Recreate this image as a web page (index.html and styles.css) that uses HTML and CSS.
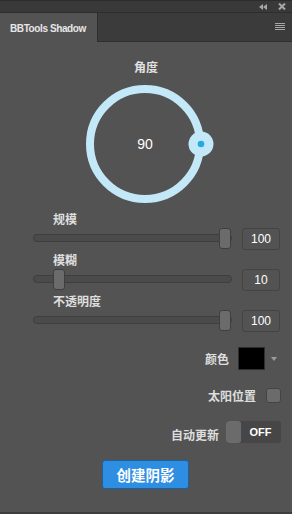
FILE: index.html
```html
<!DOCTYPE html>
<html>
<head>
<meta charset="utf-8">
<link rel="stylesheet" href="styles.css">
</head>
<body>
<div class="app">
  <div class="topbar">
    <svg class="ico-collapse" width="8" height="6" viewBox="0 0 8 6"><path d="M4 0 L0 3 L4 6 Z M8 0 L4 3 L8 6 Z" fill="#a8a8a8"/></svg>
    <svg class="ico-close" width="8" height="7" viewBox="0 0 8 7"><path d="M1 0.5 L7 6.5 M7 0.5 L1 6.5" stroke="#a8a8a8" stroke-width="2"/></svg>
  </div>
  <div class="tabs">
    <div class="tab">BBTools Shadow</div>
    <div class="tabfill">
      <svg class="menu" width="10" height="8" viewBox="0 0 10 8"><path d="M0 0.5H10M0 2.5H10M0 4.5H10M0 6.5H10" stroke="#a6a6a6" stroke-width="1"/></svg>
    </div>
  </div>
  <div class="panel">
    <div class="title">角度</div>
    <div class="dial">
      <svg width="132" height="132" viewBox="1 0 132 132">
        <circle cx="66" cy="66" r="55" fill="none" stroke="#c3e8f8" stroke-width="8"/>
        <circle cx="122" cy="66" r="12.5" fill="#c3e8f8"/>
        <circle cx="122" cy="66" r="3.3" fill="#2aa9e1"/>
        <text x="66" y="71" class="dial-val" text-anchor="middle">90</text>
      </svg>
    </div>
    <div class="field">
      <div class="label">规模</div>
      <div class="slider-row">
        <div class="track"><div class="thumb" style="left: calc((100% - 12px) * 1)"></div></div>
        <div class="numbox">100</div>
      </div>
    </div>
    <div class="field">
      <div class="label">模糊</div>
      <div class="slider-row">
        <div class="track"><div class="thumb" style="left: calc((100% - 12px) * 0.1)"></div></div>
        <div class="numbox">10</div>
      </div>
    </div>
    <div class="field">
      <div class="label">不透明度</div>
      <div class="slider-row">
        <div class="track"><div class="thumb" style="left: calc((100% - 12px) * 1)"></div></div>
        <div class="numbox">100</div>
      </div>
    </div>
    <div class="opt opt-color">
      <span class="opt-label">颜色</span>
      <span class="swatch"></span>
      <svg class="caret" width="6" height="4" viewBox="0 0 6 4"><path d="M0 0H6L3 4Z" fill="#9c9c9c"/></svg>
    </div>
    <div class="opt opt-sun">
      <span class="opt-label">太阳位置</span>
      <span class="checkbox"></span>
    </div>
    <div class="opt opt-auto">
      <span class="opt-label">自动更新</span>
      <span class="toggle"><span class="toggle-knob"></span><span class="toggle-text">OFF</span></span>
    </div>
    <div class="actions">
      <button class="btn">创建阴影</button>
    </div>
  </div>
</div>
</body>
</html>
```

FILE: styles.css
```css
* { box-sizing: border-box; }
html, body { margin: 0; padding: 0; }
body { background: #535353; width: 292px; height: 514px; overflow: hidden; }
.app {
  width: 292px; height: 514px;
  display: flex; flex-direction: column;
  font-family: "Liberation Sans", "Noto Sans CJK SC", sans-serif;
}
.topbar {
  height: 13px;
  background: #393939;
  border-top: 1px solid #2c2c2c;
  border-bottom: 1px solid #2e2e2e;
  display: flex; align-items: center; justify-content: flex-end;
  padding-right: 6px; gap: 11px;
}
.ico-collapse { margin-top: 1px; }
.tabs {
  height: 29px;
  display: flex;
  background: #3b3b3b;
}
.tab {
  width: 98px;
  background: #535353;
  border-right: 1px solid #2f2f2f;
  color: #e6e6e6;
  font-family: "Liberation Sans", sans-serif;
  font-weight: bold;
  font-size: 10px;
  letter-spacing: -0.4px;
  padding-left: 10px;
  display: flex; align-items: center;
  padding-top: 1px;
}
.tabfill {
  flex: 1;
  border-bottom: 1px solid #2f2f2f;
  display: flex; align-items: center; justify-content: flex-end;
  padding-right: 7px;
}
.menu { margin-top: -1px; }
.panel {
  flex: 1;
  background: #535353;
  border-bottom: 2px solid #3d3d3d;
  display: flex; flex-direction: column;
  padding-top: 16px;
}
.title {
  height: 18px; line-height: 18px;
  text-align: center;
  color: #e0e0e0;
  font-size: 12px; font-weight: bold;
  font-family: "Noto Sans CJK SC", sans-serif;
}
.dial {
  margin-top: 2px;
  height: 132px;
  display: flex; justify-content: center;
}
.dial svg { overflow: visible; }
.dial-val {
  fill: #ffffff;
  font-family: "Liberation Sans", sans-serif;
  font-size: 14px;
}
.field {
  display: flex; flex-direction: column;
  padding: 0 12px 0 33px;
  margin-bottom: 1px;
}
.label {
  height: 18px; line-height: 18px;
  padding-left: 20px;
  color: #dedede;
  font-size: 12px; font-weight: bold;
  font-family: "Noto Sans CJK SC", sans-serif;
}
.slider-row {
  height: 22px;
  display: flex; align-items: center; gap: 10px;
}
.track {
  position: relative;
  width: 199px; height: 8px;
  margin-top: -3px;
  background: #4b4b4b;
  border: 1px solid #3e3e3e;
  border-radius: 4px;
}
.thumb {
  position: absolute;
  top: -7px;
  width: 12px; height: 21px;
  background: #6b6b6b;
  border: 1px solid #3f3f3f;
  border-radius: 3px;
}
.numbox {
  width: 38px; height: 22px;
  border: 1px solid #444444;
  border-radius: 3px;
  background: #535353;
  color: #ffffff;
  font-size: 12px;
  display: flex; align-items: center; justify-content: center;
}
.opt {
  display: flex; align-items: center; justify-content: flex-end;
}
.opt-label {
  color: #dedede;
  font-size: 12px; font-weight: bold;
  font-family: "Noto Sans CJK SC", sans-serif;
}
.opt-color { margin-top: 14px; height: 23px; padding-right: 15px; }
.opt-color .opt-label { margin-right: 9px; }
.swatch {
  width: 27px; height: 23px;
  background: #000;
  border: 1px solid #2e2e2e;
}
.caret { margin-left: 6px; }
.opt-sun { margin-top: 18px; height: 15px; padding-right: 11px; }
.opt-sun .opt-label { margin-right: 10px; }
.checkbox {
  width: 15px; height: 15px;
  background: #6b6b6b;
  border: 1px solid #444;
  border-radius: 3px;
}
.opt-auto { margin-top: 18px; height: 22px; padding-right: 11px; }
.opt-auto .opt-label { margin-right: 7px; margin-top: 4px; }
.toggle {
  width: 55px; height: 22px;
  display: flex;
  background: #464646;
  border-radius: 3px;
  overflow: hidden;
}
.toggle-knob {
  width: 15px; height: 22px;
  background: #6b6b6b;
  border-radius: 3px;
}
.toggle-text {
  flex: 1;
  display: flex; align-items: center; justify-content: center;
  color: #ffffff;
  font-size: 11px; font-weight: bold;
  padding-right: 1px;
  margin-top: -1px;
}
.actions {
  margin-top: 17px;
  display: flex; justify-content: center;
}
.btn {
  width: 87px; height: 29px;
  background: #2e8ee2;
  border: 1px solid #1e5f9f;
  border-radius: 3px;
  color: #ffffff;
  font-family: "Noto Sans CJK SC", sans-serif;
  font-size: 14.5px; font-weight: bold;
  padding: 0;
  margin-left: -1px;
}
```
